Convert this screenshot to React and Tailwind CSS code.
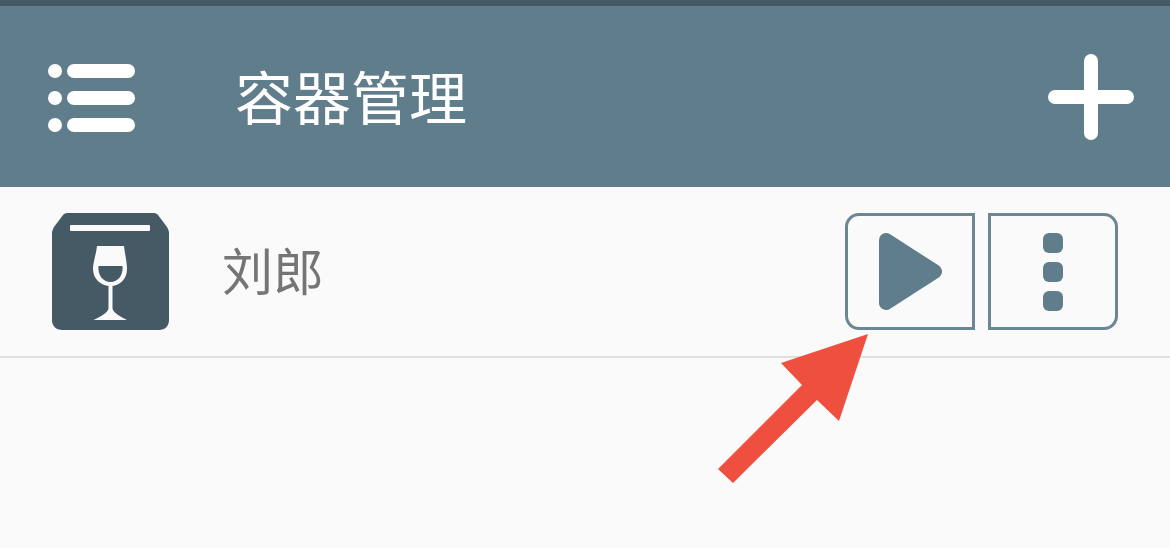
import React from "react";

const cjk = { fontFamily: '"Noto Sans CJK SC", "Noto Sans", sans-serif' };

const MenuIcon = () => (
  <div className="flex w-[87px] flex-col gap-[13px] pt-[2px]">
    {[0, 1, 2].map((i) => (
      <div key={i} className="flex items-center gap-[5px]">
        <div className="h-[14px] w-[14px] rounded-full bg-white" />
        <div className="h-[14px] flex-1 rounded-full bg-white" />
      </div>
    ))}
  </div>
);

const PlusIcon = () => (
  <svg width="86" height="86" viewBox="0 0 86 86" fill="none">
    <path d="M43 7V79M7 43H79" stroke="#fff" strokeWidth="14" strokeLinecap="round" />
  </svg>
);

const WineBoxIcon = () => (
  <svg width="117" height="117" viewBox="0 0 117 117" fill="none">
    <path
      d="M15 0H102C104 0 105 1 106 2L115 14C116 16 117 18 117 20V107C117 113 113 117 107 117H10C4 117 0 113 0 107V20C0 18 1 16 2 14L11 2C12 1 13 0 15 0Z"
      fill="#455a64"
    />
    <rect x="18" y="12" width="80" height="6" rx="1" fill="#fafafa" />
    <path
      d="M45 33H72C73 42 75 49 75 56C75 66 68 73 58.500 73C49 73 41 66 41 56C41 49 44 42 45 33Z"
      fill="#fafafa"
    />
    <path d="M46.500 53H70.500C71.500 62 66 69 58.500 69C51 69 45.500 62 46.500 53Z" fill="#455a64" />
    <path
      d="M56.500 72H60.500V95C60.500 99 67 103 75 107H41.500C50 103 56.500 99 56.500 95Z"
      fill="#fafafa"
    />
  </svg>
);

const PlayIcon = () => (
  <svg width="63" height="77" viewBox="0 0 63 77" fill="#607d8b">
    <path
      d="M7 7L56 38.500L7 70Z"
      stroke="#607d8b"
      strokeWidth="14"
      strokeLinejoin="round"
    />
  </svg>
);

const Arrow = () => (
  <svg
    className="pointer-events-none absolute left-[700px] top-[320px]"
    width="190"
    height="180"
    viewBox="0 0 190 180"
  >
    <path d="M168 14L81 43L102 65L18 149L33 163L117 80L139 101Z" fill="#ee4f3e" />
  </svg>
);

export default function App() {
  return (
    <div className="relative h-[548px] w-[1170px] overflow-hidden bg-[#fafafa]" style={cjk}>
      <div className="h-[6px] bg-[#455a64]" />
      <header className="flex h-[181px] items-center justify-between bg-[#607d8b] pl-[48px] pr-[36px]">
        <div className="flex items-center gap-[100px]">
          <MenuIcon />
          <h1 className="pb-[4px] text-[58px] font-normal leading-none text-white">容器管理</h1>
        </div>
        <PlusIcon />
      </header>
      <div className="flex h-[171px] items-center justify-between border-b-2 border-[#e0e0e0] px-[52px]">
        <div className="flex items-center gap-[53px]">
          <WineBoxIcon />
          <span className="pb-[5px] text-[51px] leading-none text-[#757575]">刘郎</span>
        </div>
        <div className="flex gap-[13px]">
          <button className="flex h-[117px] w-[130px] items-center justify-center rounded-l-[14px] border-[3px] border-[#6c8794]">
            <PlayIcon />
          </button>
          <button className="flex h-[117px] w-[130px] flex-col items-center justify-center gap-[9px] rounded-r-[14px] border-[3px] border-[#6c8794]">
            <div className="h-[20px] w-[20px] rounded-[6px] bg-[#607d8b]" />
            <div className="h-[20px] w-[20px] rounded-[6px] bg-[#607d8b]" />
            <div className="h-[20px] w-[20px] rounded-[6px] bg-[#607d8b]" />
          </button>
        </div>
      </div>
      <Arrow />
    </div>
  );
}
